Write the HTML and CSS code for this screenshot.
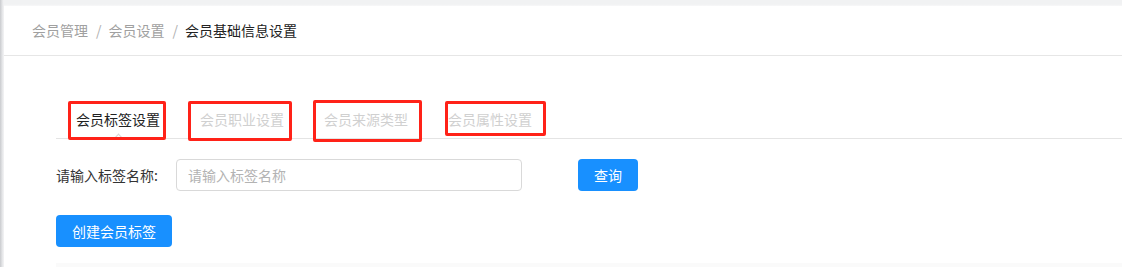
FILE: index.html
```html
<!DOCTYPE html>
<html lang="zh-CN">
<head>
<meta charset="utf-8">
<title>会员基础信息设置</title>
<link rel="stylesheet" href="styles.css">
</head>
<body>
<div class="app">
  <div class="edge"></div>
  <div class="main">
    <div class="topband"></div>
    <div class="breadcrumb">
      <span class="crumb">会员管理</span>
      <span class="sep">/</span>
      <span class="crumb">会员设置</span>
      <span class="sep">/</span>
      <span class="crumb current">会员基础信息设置</span>
    </div>
    <div class="content">
      <div class="tabs">
        <div class="tab active">会员标签设置</div>
        <div class="tab">会员职业设置</div>
        <div class="tab">会员来源类型</div>
        <div class="tab">会员属性设置</div>
        <span class="mark m1"></span>
        <span class="mark m2"></span>
        <span class="mark m3"></span>
        <span class="mark m4"></span>
      </div>
      <div class="form-row">
        <label class="label">请输入标签名称:</label>
        <input class="input" type="text" placeholder="请输入标签名称">
        <button class="btn">查询</button>
      </div>
      <div class="action-row">
        <button class="btn">创建会员标签</button>
      </div>
      <div class="table-head"></div>
    </div>
  </div>
</div>
</body>
</html>
```

FILE: styles.css
```css
* { box-sizing: border-box; }
html, body {
  margin: 0;
  padding: 0;
  background: #fff;
  font-family: "Noto Sans CJK SC", "Microsoft YaHei", sans-serif;
  font-size: 14px;
  color: #333;
}
.app {
  display: flex;
  min-height: 267px;
  overflow: hidden;
}
.edge {
  width: 4px;
  flex: none;
  background: linear-gradient(to right, #c9cbce, #e6e7e9 60%, #f4f4f5);
}
.main {
  flex: 1;
  min-width: 0;
  background: #fff;
}
.topband {
  height: 6px;
  background: linear-gradient(#f1f2f3, #f1f2f3 70%, #f8f8f9);
}
.breadcrumb {
  height: 50px;
  display: flex;
  align-items: center;
  padding: 0 0 1px 28px;
  border-bottom: 1px solid #e6e6e6;
  line-height: 20px;
}
.crumb { color: #a0a0a0; }
.crumb.current { color: #222; }
.sep {
  color: #b0b0b0;
  margin: 0 7px 0 8px;
}
.content {
  padding: 45px 0 0 52px;
}
.tabs {
  position: relative;
  display: flex;
  height: 38px;
  border-bottom: 1px solid #e4e4e4;
}
.tab {
  position: relative;
  padding: 7px 20px 0;
  line-height: 22px;
  color: #d0d0d0;
}
.tab.active { color: #222; }
.tab.active::after {
  content: "";
  position: absolute;
  left: 50%;
  bottom: -4px;
  width: 6px;
  height: 6px;
  margin-left: -3px;
  background: #fff;
  border-left: 1px solid #d6d6d6;
  border-top: 1px solid #d6d6d6;
  transform: rotate(45deg);
}
.mark {
  position: absolute;
  border: 3px solid #ff2218;
  border-radius: 2px;
}
.m1 { left: 12px; top: 0; width: 98px; height: 39px; }
.m2 { left: 132px; top: 0; width: 104px; height: 40px; }
.m3 { left: 257px; top: -1px; width: 109px; height: 42px; }
.m4 { left: 389px; top: 0; width: 101px; height: 35px; }
.form-row {
  display: flex;
  align-items: center;
  margin-top: 20px;
  height: 32px;
}
.label {
  width: 120px;
  color: #333;
  padding-bottom: 1px;
}
.input {
  width: 346px;
  height: 32px;
  padding: 0 11px;
  border: 1px solid #d9d9d9;
  border-radius: 4px;
  font-family: inherit;
  font-size: 14px;
  color: #333;
  outline: none;
}
.input::placeholder { color: #b3b3b3; }
.btn {
  height: 32px;
  padding: 0 16px;
  border: none;
  border-radius: 4px;
  background: #1890ff;
  color: #fff;
  font-family: inherit;
  font-size: 14px;
  line-height: 32px;
  cursor: pointer;
}
.form-row .btn { margin-left: 56px; }
.action-row {
  margin-top: 24px;
  display: flex;
}
.table-head {
  margin-top: 16px;
  height: 10px;
  background: #fafafa;
}
```
